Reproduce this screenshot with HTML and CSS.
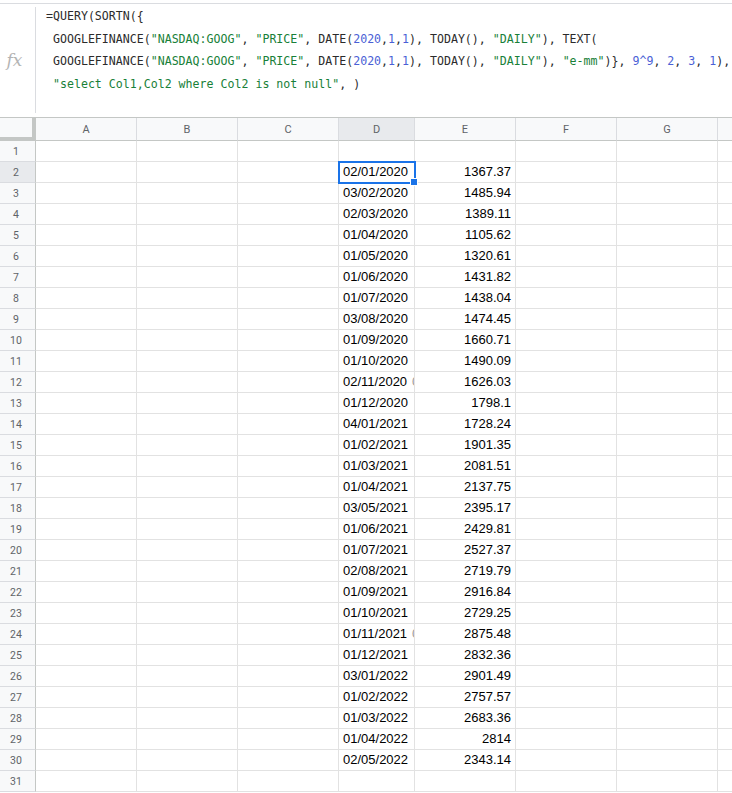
FILE: index.html
```html
<!DOCTYPE html>
<html>
<head>
<meta charset="utf-8">
<link rel="stylesheet" href="styles.css">
</head>
<body>
<div class="fbar">
  <div class="fx">fx</div>
  <div class="formula">
    <div class="fl">=QUERY(SORTN({</div>
    <div class="fl"> GOOGLEFINANCE(<span class="s">"NASDAQ:GOOG"</span>, <span class="s">"PRICE"</span>, DATE(<span class="n">2020</span>,<span class="n">1</span>,<span class="n">1</span>), TODAY(), <span class="s">"DAILY"</span>), TEXT(</div>
    <div class="fl"> GOOGLEFINANCE(<span class="s">"NASDAQ:GOOG"</span>, <span class="s">"PRICE"</span>, DATE(<span class="n">2020</span>,<span class="n">1</span>,<span class="n">1</span>), TODAY(), <span class="s">"DAILY"</span>), <span class="s">"e-mm"</span>)}, <span class="n">9^9</span>, <span class="n">2</span>, <span class="n">3</span>, <span class="n">1</span>),</div>
    <div class="fl"> <span class="s">"select Col1,Col2 where Col2 is not null"</span>, )</div>
  </div>
</div>
<div class="sheet">
  <div class="hrow">
    <div class="corner"></div>
    <div class="ch">A</div><div class="ch">B</div><div class="ch">C</div><div class="ch sel">D</div><div class="ch">E</div><div class="ch">F</div><div class="ch">G</div><div class="ch last"></div>
  </div>
  <div class="row"><div class="rh">1</div><div class="c"></div><div class="c"></div><div class="c"></div><div class="c"></div><div class="c"></div><div class="c"></div><div class="c"></div><div class="c last"></div></div>
  <div class="row"><div class="rh sel">2</div><div class="c"></div><div class="c"></div><div class="c"></div><div class="c d active">02/01/2020<span class="handle"></span></div><div class="c v">1367.37</div><div class="c"></div><div class="c"></div><div class="c last"></div></div>
  <div class="row"><div class="rh">3</div><div class="c"></div><div class="c"></div><div class="c"></div><div class="c d">03/02/2020</div><div class="c v">1485.94</div><div class="c"></div><div class="c"></div><div class="c last"></div></div>
  <div class="row"><div class="rh">4</div><div class="c"></div><div class="c"></div><div class="c"></div><div class="c d">02/03/2020</div><div class="c v">1389.11</div><div class="c"></div><div class="c"></div><div class="c last"></div></div>
  <div class="row"><div class="rh">5</div><div class="c"></div><div class="c"></div><div class="c"></div><div class="c d">01/04/2020</div><div class="c v">1105.62</div><div class="c"></div><div class="c"></div><div class="c last"></div></div>
  <div class="row"><div class="rh">6</div><div class="c"></div><div class="c"></div><div class="c"></div><div class="c d">01/05/2020</div><div class="c v">1320.61</div><div class="c"></div><div class="c"></div><div class="c last"></div></div>
  <div class="row"><div class="rh">7</div><div class="c"></div><div class="c"></div><div class="c"></div><div class="c d">01/06/2020</div><div class="c v">1431.82</div><div class="c"></div><div class="c"></div><div class="c last"></div></div>
  <div class="row"><div class="rh">8</div><div class="c"></div><div class="c"></div><div class="c"></div><div class="c d">01/07/2020</div><div class="c v">1438.04</div><div class="c"></div><div class="c"></div><div class="c last"></div></div>
  <div class="row"><div class="rh">9</div><div class="c"></div><div class="c"></div><div class="c"></div><div class="c d">03/08/2020</div><div class="c v">1474.45</div><div class="c"></div><div class="c"></div><div class="c last"></div></div>
  <div class="row"><div class="rh">10</div><div class="c"></div><div class="c"></div><div class="c"></div><div class="c d">01/09/2020</div><div class="c v">1660.71</div><div class="c"></div><div class="c"></div><div class="c last"></div></div>
  <div class="row"><div class="rh">11</div><div class="c"></div><div class="c"></div><div class="c"></div><div class="c d">01/10/2020</div><div class="c v">1490.09</div><div class="c"></div><div class="c"></div><div class="c last"></div></div>
  <div class="row"><div class="rh">12</div><div class="c"></div><div class="c"></div><div class="c"></div><div class="c d">02/11/2020<span class="cut">0</span></div><div class="c v">1626.03</div><div class="c"></div><div class="c"></div><div class="c last"></div></div>
  <div class="row"><div class="rh">13</div><div class="c"></div><div class="c"></div><div class="c"></div><div class="c d">01/12/2020</div><div class="c v">1798.1</div><div class="c"></div><div class="c"></div><div class="c last"></div></div>
  <div class="row"><div class="rh">14</div><div class="c"></div><div class="c"></div><div class="c"></div><div class="c d">04/01/2021</div><div class="c v">1728.24</div><div class="c"></div><div class="c"></div><div class="c last"></div></div>
  <div class="row"><div class="rh">15</div><div class="c"></div><div class="c"></div><div class="c"></div><div class="c d">01/02/2021</div><div class="c v">1901.35</div><div class="c"></div><div class="c"></div><div class="c last"></div></div>
  <div class="row"><div class="rh">16</div><div class="c"></div><div class="c"></div><div class="c"></div><div class="c d">01/03/2021</div><div class="c v">2081.51</div><div class="c"></div><div class="c"></div><div class="c last"></div></div>
  <div class="row"><div class="rh">17</div><div class="c"></div><div class="c"></div><div class="c"></div><div class="c d">01/04/2021</div><div class="c v">2137.75</div><div class="c"></div><div class="c"></div><div class="c last"></div></div>
  <div class="row"><div class="rh">18</div><div class="c"></div><div class="c"></div><div class="c"></div><div class="c d">03/05/2021</div><div class="c v">2395.17</div><div class="c"></div><div class="c"></div><div class="c last"></div></div>
  <div class="row"><div class="rh">19</div><div class="c"></div><div class="c"></div><div class="c"></div><div class="c d">01/06/2021</div><div class="c v">2429.81</div><div class="c"></div><div class="c"></div><div class="c last"></div></div>
  <div class="row"><div class="rh">20</div><div class="c"></div><div class="c"></div><div class="c"></div><div class="c d">01/07/2021</div><div class="c v">2527.37</div><div class="c"></div><div class="c"></div><div class="c last"></div></div>
  <div class="row"><div class="rh">21</div><div class="c"></div><div class="c"></div><div class="c"></div><div class="c d">02/08/2021</div><div class="c v">2719.79</div><div class="c"></div><div class="c"></div><div class="c last"></div></div>
  <div class="row"><div class="rh">22</div><div class="c"></div><div class="c"></div><div class="c"></div><div class="c d">01/09/2021</div><div class="c v">2916.84</div><div class="c"></div><div class="c"></div><div class="c last"></div></div>
  <div class="row"><div class="rh">23</div><div class="c"></div><div class="c"></div><div class="c"></div><div class="c d">01/10/2021</div><div class="c v">2729.25</div><div class="c"></div><div class="c"></div><div class="c last"></div></div>
  <div class="row"><div class="rh">24</div><div class="c"></div><div class="c"></div><div class="c"></div><div class="c d">01/11/2021<span class="cut">0</span></div><div class="c v">2875.48</div><div class="c"></div><div class="c"></div><div class="c last"></div></div>
  <div class="row"><div class="rh">25</div><div class="c"></div><div class="c"></div><div class="c"></div><div class="c d">01/12/2021</div><div class="c v">2832.36</div><div class="c"></div><div class="c"></div><div class="c last"></div></div>
  <div class="row"><div class="rh">26</div><div class="c"></div><div class="c"></div><div class="c"></div><div class="c d">03/01/2022</div><div class="c v">2901.49</div><div class="c"></div><div class="c"></div><div class="c last"></div></div>
  <div class="row"><div class="rh">27</div><div class="c"></div><div class="c"></div><div class="c"></div><div class="c d">01/02/2022</div><div class="c v">2757.57</div><div class="c"></div><div class="c"></div><div class="c last"></div></div>
  <div class="row"><div class="rh">28</div><div class="c"></div><div class="c"></div><div class="c"></div><div class="c d">01/03/2022</div><div class="c v">2683.36</div><div class="c"></div><div class="c"></div><div class="c last"></div></div>
  <div class="row"><div class="rh">29</div><div class="c"></div><div class="c"></div><div class="c"></div><div class="c d">01/04/2022</div><div class="c v">2814</div><div class="c"></div><div class="c"></div><div class="c last"></div></div>
  <div class="row"><div class="rh">30</div><div class="c"></div><div class="c"></div><div class="c"></div><div class="c d">02/05/2022</div><div class="c v">2343.14</div><div class="c"></div><div class="c"></div><div class="c last"></div></div>
  <div class="row"><div class="rh">31</div><div class="c"></div><div class="c"></div><div class="c"></div><div class="c"></div><div class="c"></div><div class="c"></div><div class="c"></div><div class="c last"></div></div>
</div>
</body>
</html>
```
FILE: styles.css
```css
* { box-sizing: border-box; }
html, body { margin: 0; padding: 0; background: #fff; }
body { width: 732px; height: 793px; overflow: hidden; }

.fbar {
  margin-top: 3px;
  height: 114px;
  border-top: 1px solid #dadce0;
  display: flex;
  overflow: hidden;
}
.fx {
  flex: none;
  width: 36px;
  margin: 3px 0 4px 0;
  border-right: 1px solid #dadce0;
  display: flex;
  align-items: center;
  justify-content: center;
  padding-right: 6px;
  font-family: "DejaVu Serif", "Liberation Serif", serif;
  font-style: italic;
  font-size: 17px;
  color: #b4b4b4;
}
.formula {
  flex: 1;
  min-width: 0;
  padding-left: 10px;
  padding-top: 1px;
  font-family: "DejaVu Sans Mono", "Liberation Mono", monospace;
  font-size: 11.6px;
  line-height: 22.6px;
  color: #2b2b2b;
}
.fl { white-space: pre; }
.s { color: #188038; }
.n { color: #4a5fd6; }

.sheet {
  font-family: "Liberation Sans", Arial, sans-serif;
}
.hrow, .row {
  display: grid;
  grid-template-columns: 36px 101px 101px 101px 76px 101px 101px 101px 1fr;
}
.hrow {
  height: 24px;
  border-top: 1px solid #c4c7c5;
}
.row { height: 21px; }

.corner {
  background: #f8f9fa;
  border-right: 4px solid #c4c7c5;
  border-bottom: 4px solid #c4c7c5;
}
.ch {
  background: #f8f9fa;
  border-right: 1px solid #dadce0;
  border-bottom: 1px solid #c4c7c5;
  display: flex;
  align-items: center;
  justify-content: center;
  font-family: Roboto, "Liberation Sans", Arial, sans-serif;
  font-size: 11px;
  color: #5f6368;
}
.ch.sel { background: #e8eaed; }
.ch.last { border-right: none; }

.rh {
  background: #f8f9fa;
  border-right: 1px solid #c4c7c5;
  border-bottom: 1px solid #dadce0;
  display: flex;
  align-items: center;
  justify-content: center;
  padding-right: 3px;
  font-family: Roboto, "Liberation Sans", Arial, sans-serif;
  font-size: 10.5px;
  color: #5f6368;
}
.rh.sel { background: #e8eaed; }

.c {
  border-right: 1px solid #e2e2e2;
  border-bottom: 1px solid #e2e2e2;
  font-size: 13px;
  line-height: 20px;
  color: #000;
  white-space: nowrap;
  overflow: hidden;
}
.c.last { border-right: none; }
.c.d { padding-left: 4px; }
.c.v { text-align: right; padding-right: 4px; }
.cut { margin-left: 5px; color: #999; }

.c.active {
  position: relative;
  overflow: visible;
  outline: 2px solid #1a73e8;
  outline-offset: -1px;
  z-index: 2;
}
.handle {
  position: absolute;
  right: -4px;
  bottom: -4px;
  width: 6px;
  height: 6px;
  background: #1a73e8;
  border: 1px solid #fff;
  box-sizing: content-box;
}
```
